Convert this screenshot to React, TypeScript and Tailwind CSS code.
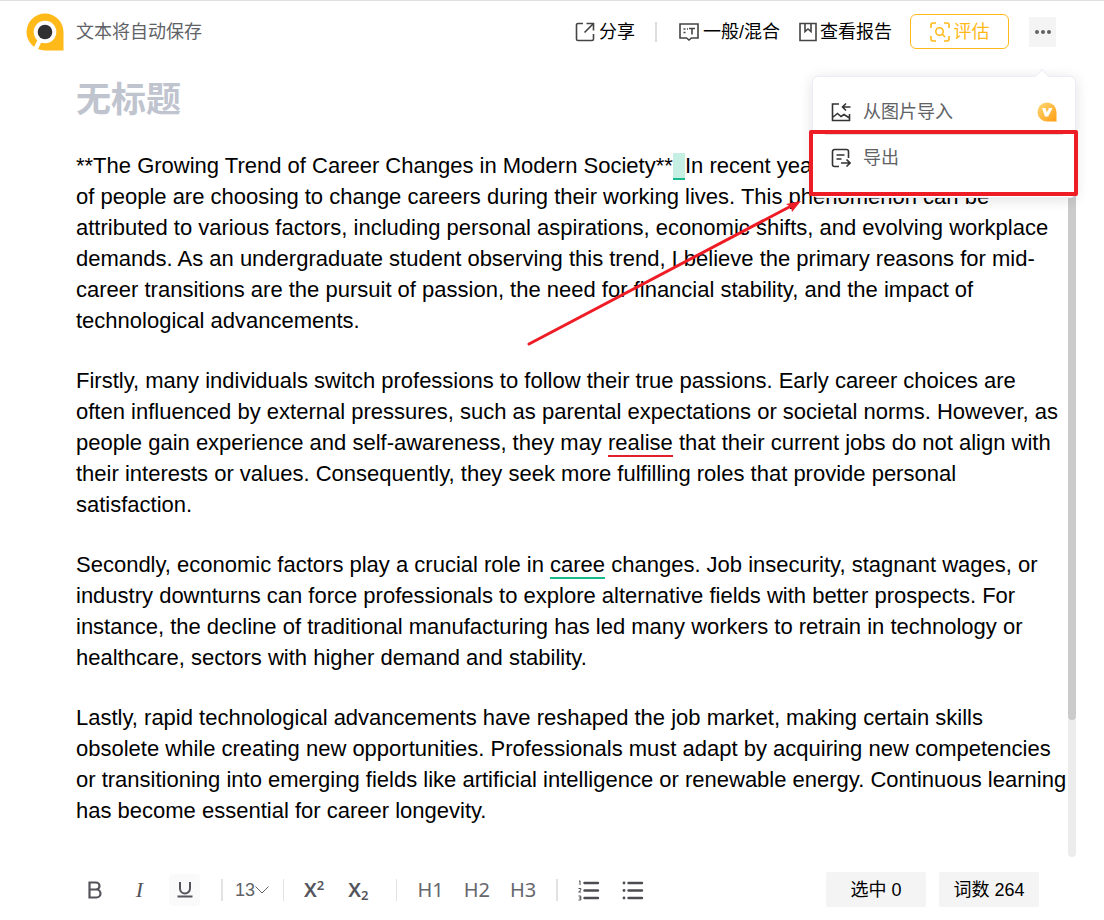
import type { ReactNode } from 'react'

const paragraphs: ReactNode[] = [
  <>
    **The Growing Trend of Career Changes in Modern Society**
    <span className="whitespace-pre border-b-2 border-[#15b98c] bg-[#c5efe2]">{'  '}</span>
    In recent years, an increasing number of people are choosing to change careers during their working lives. This
    phenomenon can be attributed to various factors, including personal aspirations, economic shifts, and evolving
    workplace demands. As an undergraduate student observing this trend, I believe the primary reasons for mid-career
    transitions are the pursuit of passion, the need for financial stability, and the impact of technological
    advancements.
  </>,
  <>
    Firstly, many individuals switch professions to follow their true passions. Early career choices are often
    influenced by external pressures, such as parental expectations or societal norms. However, as people gain
    experience and self-awareness, they may <span className="border-b-2 border-[#e0202a]">realise</span> that their
    current jobs do not align with their interests or values. Consequently, they seek more fulfilling roles that
    provide personal satisfaction.
  </>,
  <>
    Secondly, economic factors play a crucial role in <span className="border-b-2 border-[#15b98c]">caree</span>{' '}
    changes. Job insecurity, stagnant wages, or industry downturns can force professionals to explore alternative
    fields with better prospects. For instance, the decline of traditional manufacturing has led many workers to
    retrain in technology or healthcare, sectors with higher demand and stability.
  </>,
  <>
    Lastly, rapid technological advancements have reshaped the job market, making certain skills obsolete while
    creating new opportunities. Professionals must adapt by acquiring new competencies or transitioning into emerging
    fields like artificial intelligence or renewable energy. Continuous learning has become essential for career
    longevity.
  </>,
]

function Icon({ children, className = '' }: { children: ReactNode; className?: string }) {
  return (
    <svg
      viewBox="0 0 20 20"
      className={`size-5 shrink-0 ${className}`}
      fill="none"
      stroke="currentColor"
      strokeWidth="1.6"
      aria-hidden="true"
    >
      {children}
    </svg>
  )
}

function Logo() {
  return (
    <svg viewBox="0 0 38 38" className="size-[38px] shrink-0" role="img" aria-label="logo">
      <path d="M19 0.5A18.5 18.5 0 0 1 37.5 19V37.5H19A18.5 18.5 0 0 1 19 0.5z" fill="#ffb919" />
      <path d="M14.500 26L9 37" stroke="#fff" strokeWidth="4.500" />
      <circle cx="19" cy="19" r="11.3" fill="#fff" />
      <circle cx="19" cy="19" r="7.3" fill="#303033" />
    </svg>
  )
}

function MoreMenu() {
  return (
    <div className="absolute -right-5 top-[59px] z-10 w-[264px]">
      <div className="relative rounded-md border border-[#ebeef5] bg-white px-3 pb-4 pt-3.5 shadow-[0_2px_14px_rgba(0,0,0,0.12)]">
        <span className="absolute -top-[6px] right-7 size-[10px] rotate-45 border-l border-t border-[#ebeef5] bg-white" />
        <button className="flex h-11 w-full items-center border-b border-[#dcdcde] px-1.5 text-[#606266]">
          <Icon className="text-[#333]">
            <path d="M8 2H1.500v16.500h17V12M1.500 15.500l5-4 3.500 3 3-2 5.500 3.500M19.500 5h-8M15 1.500L11.500 5 15 8.500" />
          </Icon>
          <span className="ml-3">从图片导入</span>
          <svg viewBox="0 0 20 20" className="ml-auto size-5" aria-hidden="true">
            <defs>
              <linearGradient id="vip" x1="0" y1="0" x2="1" y2="1">
                <stop offset="0" stopColor="#ffd977" />
                <stop offset="1" stopColor="#ff9d12" />
              </linearGradient>
            </defs>
            <path d="M10 0.5a9.5 9.5 0 0 1 9.5 9.5v9.5H10a9.5 9.5 0 0 1 0-19z" fill="url(#vip)" />
            <path d="M5 6h3.500l1.300 4.500L12 6h3.500l-4.300 8.500H8z" fill="#fff" />
          </svg>
        </button>
        <button className="flex h-[46px] w-full items-center px-1.5 text-[#606266]">
          <Icon className="text-[#333]">
            <path d="M17.500 10V3.500a2 2 0 0 0-2-2h-12a2 2 0 0 0-2 2v13a2 2 0 0 0 2 2H8M5.500 7h8M5.500 11h5M10 15h9M15.500 11.500L19 15l-3.500 3.500" />
          </Icon>
          <span className="ml-3">导出</span>
        </button>
      </div>
      <div className="pointer-events-none absolute -left-[3px] -right-[2px] top-[54px] h-[66px] rounded-xs border-4 border-[#ee1c25]" />
      <svg
        viewBox="0 0 276 148"
        className="pointer-events-none absolute right-[274px] top-[122px] h-[148px] w-[276px]"
        aria-hidden="true"
      >
        <path d="M3 146L267 7" stroke="#ee1c25" strokeWidth="3" strokeLinecap="round" />
        <path d="M275 3L266 14l-1-5-5-3z" fill="#ee1c25" />
      </svg>
    </div>
  )
}

function Header() {
  return (
    <header className="flex h-[62px] items-center border-t border-[#e0e0e0] pl-[26px] pr-12 text-lg">
      <Logo />
      <span className="ml-3 text-[#606266]">文本将自动保存</span>
      <nav className="ml-auto flex items-center">
        <button className="flex items-center gap-1">
          <Icon className="text-[#444]">
            <path d="M8 1.500H3A1.500 1.500 0 0 0 1.500 3v14A1.500 1.500 0 0 0 3 18.500h14a1.500 1.500 0 0 0 1.500-1.500V12M11.500 1.500h7v7M18.500 1.500l-9 9" />
          </Icon>
          分享
        </button>
        <span className="ml-5 mr-[22px] h-5 w-0.5 bg-[#dedede]" />
        <button className="flex items-center gap-1">
          <Icon className="text-[#444]">
            <path d="M1 2h18v14h-6.500L10 18l-2.500-2H1zM4.500 7h2M8 7h1M4.500 10.500h2M10 6.500h6M13 6.500v6" />
          </Icon>
          一般/混合
        </button>
        <button className="ml-[18px] flex items-center gap-0.5">
          <Icon className="text-[#444]">
            <path d="M2 1.500h16v17H2zM7 1.500v8l3-2.500 3 2.500v-8" />
          </Icon>
          查看报告
        </button>
        <button className="ml-[18px] flex h-[35px] w-[99px] items-center justify-center gap-1 rounded-md border border-[#ffb919] text-[#ffb919]">
          <Icon>
            <path d="M6 1H3a2 2 0 0 0-2 2v3M14 1h3a2 2 0 0 1 2 2v3M1 14v3a2 2 0 0 0 2 2h3M19 14v3a2 2 0 0 1-2 2h-3" />
            <circle cx="9.500" cy="9.500" r="3.700" />
            <path d="M12 12l3 3" />
          </Icon>
          评估
        </button>
        <div className="relative ml-5">
          <button aria-label="更多" className="flex h-[30px] w-[27px] items-center justify-center bg-[#f4f4f4]">
            <svg viewBox="0 0 18 6" className="h-1.5 w-[18px]" fill="#606266" aria-hidden="true">
              <circle cx="3" cy="3" r="2" />
              <circle cx="9" cy="3" r="2" />
              <circle cx="15" cy="3" r="2" />
            </svg>
          </button>
          <MoreMenu />
        </div>
      </nav>
    </header>
  )
}

function ListIcon({ ordered = false }: { ordered?: boolean }) {
  return (
    <svg viewBox="0 0 22 22" className="size-[22px]" aria-hidden="true">
      <path d="M6.500 4H20M6.500 11.500H20M6.500 19H20" stroke="#4c4c52" strokeWidth="2.400" strokeLinecap="round" />
      {ordered ? (
        <path
          d="M1 2.500l1-.8V6M.5 9.500h2.300v1.500L.6 13h2.500M.5 17h2.300v4H.5M1 19h1.800"
          fill="none"
          stroke="#4c4c52"
          strokeWidth="1"
        />
      ) : (
        <g fill="#4c4c52">
          <circle cx="2" cy="4" r="1.400" />
          <circle cx="2" cy="11.500" r="1.400" />
          <circle cx="2" cy="19" r="1.400" />
        </g>
      )}
    </svg>
  )
}

const toolButton = 'flex h-8 w-[31px] items-center justify-center rounded'

function Toolbar() {
  return (
    <footer className="flex h-[63px] items-center pl-[79px] pr-[65px] pt-0.5 text-[#54555c]">
      <div className="flex items-center gap-3.5">
        <button aria-label="加粗" className={toolButton}>
          <svg viewBox="0 0 14 18" className="h-[18px] w-3.5" fill="none" stroke="currentColor" strokeWidth="2.200" aria-hidden="true">
            <path d="M1.500 1.500H8a3.500 3.500 0 0 1 0 7H1.500zM1.500 8.500h7a4 4 0 0 1 0 8h-7z" />
          </svg>
        </button>
        <button className={`${toolButton} font-['Liberation_Serif'] text-[22px] italic`}>I</button>
        <button aria-label="下划线" className={`${toolButton} bg-[#fafafa]`}>
          <svg viewBox="0 0 16 17" className="h-[17px] w-4" fill="none" stroke="currentColor" strokeWidth="2" aria-hidden="true">
            <path d="M3 1v6.500a5 5 0 0 0 10 0V1M.5 15.500h15" />
          </svg>
        </button>
      </div>
      <span className="ml-[21px] h-[22px] w-0.5 bg-[#e2e2e2]" />
      <button className="ml-3 flex items-center text-lg text-[#606266]">
        13
        <svg viewBox="0 0 14 8" className="h-2 w-3.5" fill="none" stroke="currentColor" aria-hidden="true">
          <path d="M.5.5L7 7 13.500.5" />
        </svg>
      </button>
      <span className="ml-3.5 h-[22px] w-px bg-[#e2e2e2]" />
      <div className="ml-5 flex gap-6 font-['Noto_Sans'] text-xl font-semibold leading-6">
        <button>X<sup className="text-[13px]">2</sup></button>
        <button>X<sub className="text-[13px]">2</sub></button>
      </div>
      <span className="ml-7 h-[22px] w-px bg-[#e2e2e2]" />
      <div className="ml-5 flex gap-5 font-['Noto_Sans'] text-xl text-[#66676d]">
        <button>H1</button>
        <button>H2</button>
        <button>H3</button>
      </div>
      <span className="ml-5 h-[22px] w-0.5 bg-[#e2e2e2]" />
      <button aria-label="有序列表" className="ml-5"><ListIcon ordered /></button>
      <button aria-label="无序列表" className="ml-[22px]"><ListIcon /></button>
      <div className="ml-auto flex gap-[13px] text-lg text-black">
        <span className="flex h-[35px] w-[100px] items-center justify-center rounded-xs bg-[#f4f4f4]">选中 0</span>
        <span className="flex h-[35px] w-[100px] items-center justify-center rounded-xs bg-[#f4f4f4]">词数 264</span>
      </div>
    </footer>
  )
}

export default function App() {
  return (
    <div className="flex min-h-screen flex-col bg-white font-['Liberation_Sans','Noto_Sans_CJK_SC',sans-serif] text-black">
      <Header />
      <main className="flex flex-1 flex-col pl-[76px] pr-7">
        <h1 className="flex h-[76px] items-center text-[35px] font-bold text-[#bfc4cf]">无标题</h1>
        <div className="flex flex-1">
          <article className="flex-1 pt-3 text-[22px] leading-[31px]">
            {paragraphs.map((text, i) => (
              <p key={i} className="mb-[29px]">{text}</p>
            ))}
          </article>
          <div className="w-2 shrink-0 rounded bg-[#ececec]">
            <div className="h-[81%] rounded bg-[#cbcbcb]" />
          </div>
        </div>
      </main>
      <Toolbar />
    </div>
  )
}
